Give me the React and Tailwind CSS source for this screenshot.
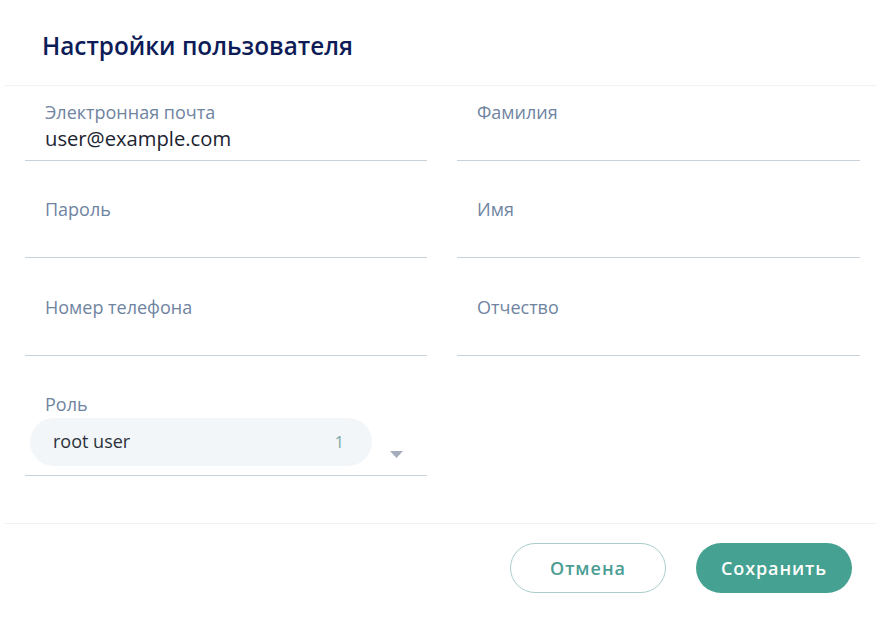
import React from "react";

const font = { fontFamily: '"Open Sans", "Noto Sans", sans-serif' };

function Field({ label, value }) {
  return (
    <div className="flex flex-col h-[60px] border-b border-[#c8d0db] pl-[20px]">
      <div className="text-[18px] leading-[22px] text-[#6f84a1]">{label}</div>
      {value ? (
        <div className="text-[20.2px] leading-[26px] text-[#1c2330] mt-[2px]">{value}</div>
      ) : null}
    </div>
  );
}

export default function App() {
  return (
    <div className="w-[882px] h-[620px] bg-white flex flex-col" style={font}>
      <div className="h-[86px] mx-[5px] border-b border-[#f0f2f4] flex items-center pl-[37px] pt-[8px]">
        <h1 className="text-[24.3px] font-semibold text-[#0d1b57]">Настройки пользователя</h1>
      </div>
      <div className="grid grid-cols-[402px_403px] gap-x-[30px] gap-y-[37.5px] pl-[25px] pt-[14.5px]">
        <Field label="Электронная почта" value="user@example.com" />
        <Field label="Фамилия" />
        <Field label="Пароль" />
        <Field label="Имя" />
        <Field label="Номер телефона" />
        <Field label="Отчество" />
        <div className="flex flex-col border-b border-[#c8d0db] h-[83px]">
          <div className="pl-[20px] text-[18px] leading-[22px] text-[#6f84a1]">Роль</div>
          <div className="flex items-start mt-[2.5px]">
            <div className="ml-[5px] w-[342px] h-[48px] rounded-full bg-[#f2f6f9] flex items-center justify-between pl-[23px] pr-[28px]">
              <span className="text-[18px] text-[#2b313a]">root user</span>
              <span className="text-[16px] text-[#7aa6a3]">1</span>
            </div>
            <svg className="ml-[18px] mt-[33px]" width="13" height="7" viewBox="0 0 13 7">
              <path d="M0 0 L13 0 L6.5 7 Z" fill="#a3adbb" />
            </svg>
          </div>
        </div>
      </div>
      <div className="mx-[5px] mt-[47px] border-t border-[#f0f2f4] flex justify-end gap-[30px] pr-[25px] pt-[19px]">
        <button className="w-[156px] h-[50px] rounded-full border border-[#a9cdcd] text-[#4b9d94] text-[18px] font-semibold tracking-[1px] bg-white">
          Отмена
        </button>
        <button className="w-[156px] h-[50px] rounded-full bg-[#45a191] text-white text-[18px] font-semibold tracking-[0.9px]">
          Сохранить
        </button>
      </div>
    </div>
  );
}
